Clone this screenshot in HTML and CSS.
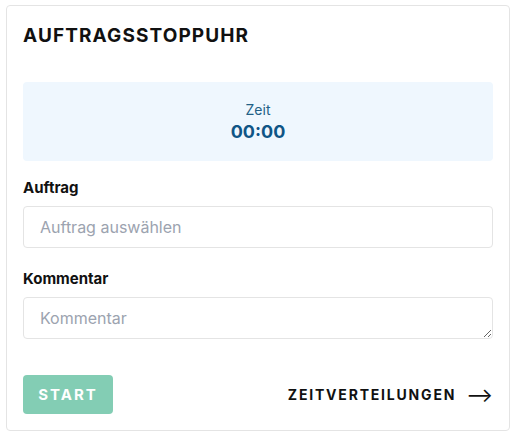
FILE: index.html
```html
<!DOCTYPE html>
<html lang="de">
<head>
    <meta charset="UTF-8">
    <meta name="viewport" content="width=device-width, initial-scale=1.0">
    <title>Auftragsstoppuhr</title>
    <link rel="stylesheet" href="styles.css">
</head>
<body>

    <div class="card">
        <h2 class="card-title">AUFTRAGSSTOPPUHR</h2>

        <div class="timer">
            <div class="timer-label">Zeit</div>
            <div class="timer-value" id="timerValue">00:00</div>
        </div>

        <label class="field-label" for="order">Auftrag</label>
        <input class="field" id="order" type="text" placeholder="Auftrag auswählen">

        <label class="field-label field-label-spaced" for="comment">Kommentar</label>
        <textarea class="field field-area" id="comment" placeholder="Kommentar"></textarea>

        <div class="actions">
            <button class="start-btn" id="startBtn" disabled>START</button>
            <a class="link-btn" href="#">ZEITVERTEILUNGEN <span class="arrow">&#10230;</span></a>
        </div>
    </div>

</body>
</html>
```

FILE: styles.css
```css
body {
    margin: 0;
    padding: 5px 10px 0 6px;
    background-color: #ffffff;
    font-family: Inter, "Noto Sans", sans-serif;
    color: #111111;
}

.card {
    border: 1px solid #e4e4e4;
    border-radius: 4px;
    padding: 16px 16px 16px 16px;
}

.card-title {
    margin: 0;
    font-size: 19px;
    line-height: 28px;
    font-weight: 700;
    letter-spacing: 1.1px;
    color: #111111;
}

.timer {
    margin-top: 32px;
    height: 79px;
    background-color: #eff7fe;
    border-radius: 4px;
    display: flex;
    flex-direction: column;
    justify-content: center;
    align-items: center;
}

.timer-label {
    font-size: 14px;
    line-height: 20px;
    color: #225f86;
}

.timer-value {
    font-size: 18px;
    line-height: 24px;
    font-weight: 700;
    color: #0f5586;
}

.field-label {
    display: block;
    margin-top: 17px;
    margin-bottom: 8px;
    font-size: 15px;
    line-height: 20px;
    font-weight: 700;
    color: #111111;
}

.field-label-spaced {
    margin-top: 21px;
}

.field {
    display: block;
    box-sizing: border-box;
    width: 100%;
    height: 42px;
    margin: 0;
    padding: 0 16px;
    border: 1px solid #e4e4e4;
    border-radius: 4px;
    font-family: inherit;
    font-size: 16px;
    color: #111111;
    background-color: #ffffff;
}

.field::placeholder {
    color: #9ca3af;
}

.field-area {
    padding-top: 9px;
    resize: vertical;
    line-height: 22px;
}

.actions {
    display: flex;
    justify-content: space-between;
    align-items: center;
    margin-top: 36px;
}

.start-btn {
    width: 90px;
    height: 39px;
    border: none;
    border-radius: 4px;
    background-color: #83cdb4;
    color: #ffffff;
    font-family: inherit;
    font-size: 15px;
    font-weight: 700;
    letter-spacing: 2px;
}

.link-btn {
    display: flex;
    align-items: center;
    gap: 10px;
    color: #111111;
    text-decoration: none;
    font-size: 14px;
    font-weight: 700;
    letter-spacing: 1.8px;
}

.arrow {
    font-size: 20px;
    font-weight: 400;
    letter-spacing: 0;
}
```
